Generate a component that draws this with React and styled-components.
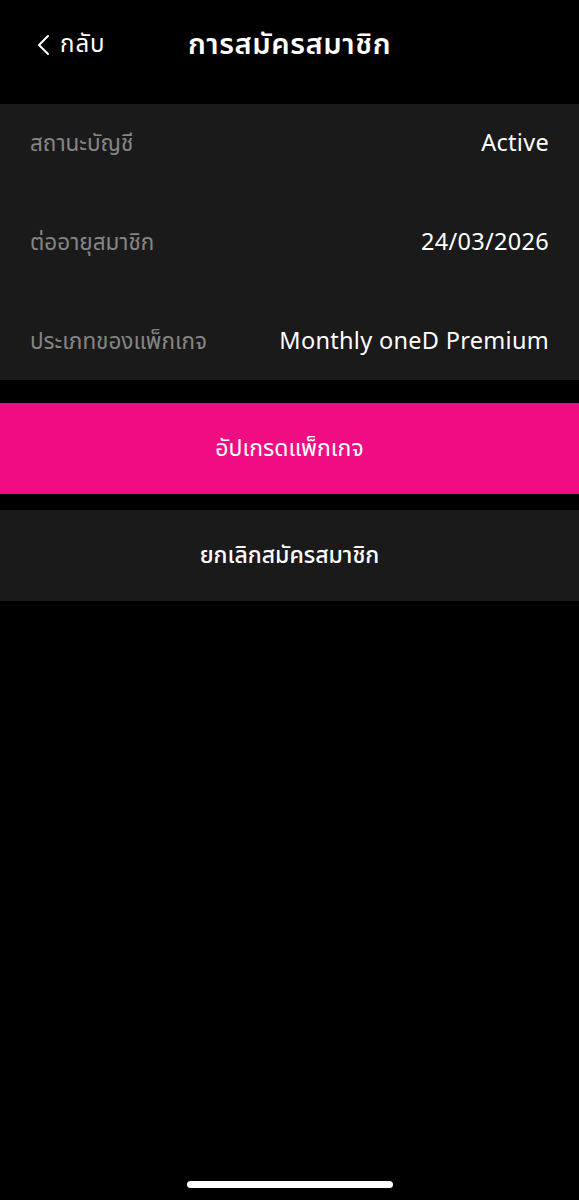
import React from "react";
import styled, {createGlobalStyle} from "styled-components";

const GlobalStyle = createGlobalStyle`
  html, body {
    margin: 0;
    padding: 0;
    background: #000;
  }
  body {
    font-family: "Noto Sans Thai", "Noto Sans", "Open Sans", sans-serif;
    color: #fff;
  }
`;

const Page = styled.div`
  min-height: 100vh;
  display: flex;
  flex-direction: column;
  background: #000;
`;

const Header = styled.div`
  height: 104px;
  display: grid;
  grid-template-columns: 1fr auto 1fr;
  align-items: center;
  padding: 0 36px 14px;
  box-sizing: border-box;
`;

const BackButton = styled.button`
  justify-self: start;
  display: flex;
  align-items: center;
  gap: 10px;
  background: none;
  border: none;
  padding: 0;
  color: #fff;
  font-family: inherit;
  font-size: 24px;
  letter-spacing: 1px;
  cursor: pointer;
`;

const Title = styled.h1`
  margin: 0;
  font-size: 29px;
  font-weight: 600;
  letter-spacing: 0.6px;
`;

const InfoPanel = styled.div`
  background: #1a1a1a;
  display: flex;
  flex-direction: column;
  gap: 21px;
  padding: 0 30px;
`;

const InfoRow = styled.div`
  height: 78px;
  display: flex;
  justify-content: space-between;
  align-items: center;
  padding-top: 2px;
  box-sizing: border-box;
`;

const Label = styled.span`
  font-size: 22.5px;
  color: #858585;
`;

const Value = styled.span`
  font-size: 23.5px;
  color: #fff;
  letter-spacing: 0.3px;
`;

const Actions = styled.div`
  display: flex;
  flex-direction: column;
  gap: 16px;
  margin-top: 23px;
`;

const ActionButton = styled.button`
  height: 91px;
  width: 100%;
  border: none;
  background: ${props => props.$primary ? "#f20c83" : "#1a1a1a"};
  color: #fff;
  font-family: inherit;
  font-size: 23px;
  font-weight: ${props => props.$primary ? 400 : 500};
  cursor: pointer;
`;

const Spacer = styled.div`
  flex: 1;
`;

const HomeIndicator = styled.div`
  align-self: center;
  width: 206px;
  height: 7px;
  border-radius: 4px;
  background: #fff;
  margin-bottom: 12px;
`;

const info = [
    {label: "สถานะบัญชี", value: "Active"},
    {label: "ต่ออายุสมาชิก", value: "24/03/2026"},
    {label: "ประเภทของแพ็กเกจ", value: "Monthly oneD Premium"},
];

export default function App() {
    return (
        <Page>
            <GlobalStyle/>
            <Header>
                <BackButton>
                    <svg width="14" height="22" viewBox="0 0 14 22" fill="none">
                        <path d="M12 2 L3 11 L12 20" stroke="#fff" strokeWidth="2" strokeLinecap="round" strokeLinejoin="round"/>
                    </svg>
                    กลับ
                </BackButton>
                <Title>การสมัครสมาชิก</Title>
                <div/>
            </Header>
            <InfoPanel>
                {info.map(item =>
                    <InfoRow key={item.label}>
                        <Label>{item.label}</Label>
                        <Value>{item.value}</Value>
                    </InfoRow>
                )}
            </InfoPanel>
            <Actions>
                <ActionButton $primary>อัปเกรดแพ็กเกจ</ActionButton>
                <ActionButton>ยกเลิกสมัครสมาชิก</ActionButton>
            </Actions>
            <Spacer/>
            <HomeIndicator/>
        </Page>
    );
}
